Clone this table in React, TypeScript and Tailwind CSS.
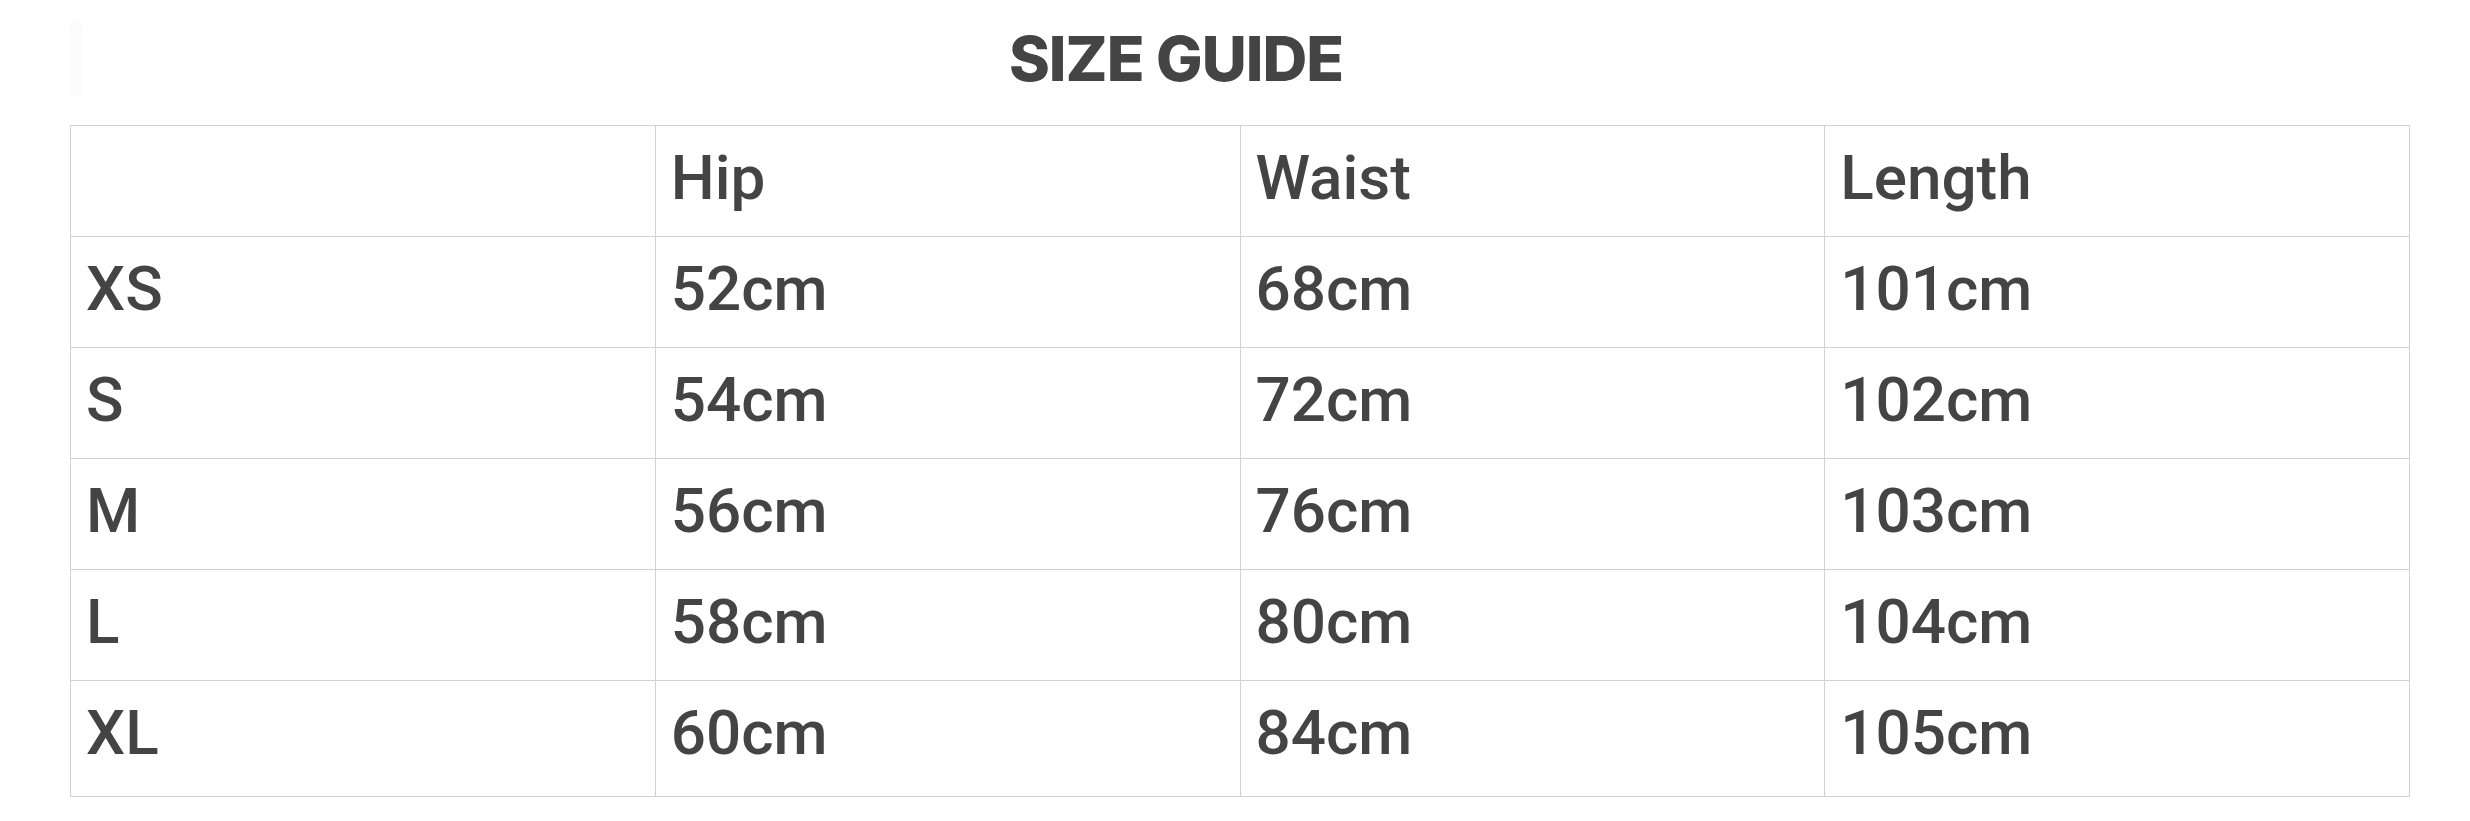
const rows = [
  { size: "XS", hip: "52cm", waist: "68cm", length: "101cm" },
  { size: "S", hip: "54cm", waist: "72cm", length: "102cm" },
  { size: "M", hip: "56cm", waist: "76cm", length: "103cm" },
  { size: "L", hip: "58cm", waist: "80cm", length: "104cm" },
  { size: "XL", hip: "60cm", waist: "84cm", length: "105cm" },
];

export default function App() {
  return (
    <main className="min-h-screen bg-white pl-[70px] pt-[20px] text-[#444444]">
      {/* 제목 */}
      <div className="flex h-[77px] w-[2200px] items-center">
        <div className="h-[77px] w-[12px] rounded-full bg-[#fbfbfb]" />
        <h1 className="flex-1 text-center font-['Inter','Liberation_Sans',sans-serif] text-[62px] font-extrabold leading-[62px] tracking-[-1px]">
          SIZE GUIDE
        </h1>
      </div>

      {/* 사이즈 표 */}
      <table className="mt-[28px] w-[2340px] table-fixed border-collapse font-['Roboto','Liberation_Sans',sans-serif] text-[62px] font-medium leading-[71px]">
        <thead>
          <tr>
            <th className="h-[111px] border border-[#d2d2d2] pl-[15px] pt-[16px] text-left align-top font-medium" />
            <th className="h-[111px] border border-[#d2d2d2] pl-[15px] pt-[16px] text-left align-top font-medium">
              Hip
            </th>
            <th className="h-[111px] border border-[#d2d2d2] pl-[15px] pt-[16px] text-left align-top font-medium">
              Waist
            </th>
            <th className="h-[111px] border border-[#d2d2d2] pl-[15px] pt-[16px] text-left align-top font-medium">
              Length
            </th>
          </tr>
        </thead>
        <tbody>
          {rows.map((r, i) => {
            const last = i === rows.length - 1;
            const cell = last
              ? "h-[116px] border border-[#d2d2d2] pl-[15px] pt-[16px] align-top"
              : "h-[111px] border border-[#d2d2d2] pl-[15px] pt-[16px] align-top";
            return (
              <tr key={r.size}>
                <td className={cell}>{r.size}</td>
                <td className={cell}>{r.hip}</td>
                <td className={cell}>{r.waist}</td>
                <td className={cell}>{r.length}</td>
              </tr>
            );
          })}
        </tbody>
      </table>
    </main>
  );
}
